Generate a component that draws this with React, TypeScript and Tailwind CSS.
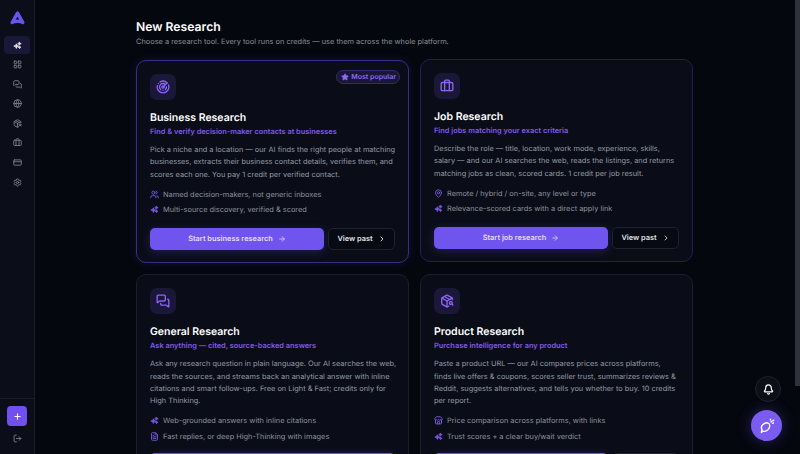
import React from "react";
import { ArrowRight, Bell, Briefcase, ChevronRight, CreditCard, FileText, Globe, LayoutGrid, LogOut, MapPin, MessagesSquare, PackageSearch, Plus, Radar, Star, Store, Users, Settings } from "lucide-react";

function Spark({ className = "" }: { className?: string; strokeWidth?: number }) {
  return (
    <svg viewBox="0 0 24 24" className={className} fill="currentColor" stroke="currentColor" strokeWidth="2" strokeLinejoin="round">
      <path d="M9 7.500l2 4.300 4.600 1.700-4.400 1.900L9 20l-2.200-4.600L2 13.500l4.700-1.800z" />
      <path d="M17 2.500l1.400 3.200 3.400 1.400-3.400 1.400L17 11.500l-1.400-3L12.400 7.100l3.200-1.400z" />
      <path d="M17.500 13.500l1.100 2.300 2.400 1-2.400 1.100-1.100 2.600-1.100-2.600-2.400-1.100 2.400-1z" />
    </svg>
  );
}

type Feature = { icon: React.ReactNode; text: string };
type CardProps = {
  icon: React.ReactNode;
  title: string;
  sub: string;
  desc: string;
  features: Feature[];
  cta: string;
  highlight?: boolean;
  accent?: boolean;
  lift?: boolean;
  top?: boolean;
  noPast?: boolean;
};

function Card({ icon, title, sub, desc, features, cta, highlight, accent, lift, top, noPast }: CardProps) {
  const border = highlight ? "border-[#3a2d85]" : accent ? "border-[#221f52]" : "border-[#1b1f2d]";
  return (
    <div className={`relative rounded-[10px] border ${border} bg-[#0a0d18] px-[13px] pt-[13px] pb-[12px] ${lift ? "-translate-y-px" : ""} ${highlight ? "shadow-[0_0_10px_rgba(80,60,200,0.18)]" : ""}`}>
      {highlight && (
        <div className="absolute right-[8px] top-[9px] flex h-[14px] items-center gap-[2px] rounded-full border border-[#33296e] bg-[#1a1638] pl-[4px] pr-[3px] text-[7px] font-semibold text-[#8b6cf0]">
          <Star className="h-[8px] w-[8px]" fill="currentColor" />
          Most popular
        </div>
      )}
      <div className="flex h-[26px] w-[26px] items-center justify-center rounded-[7px] bg-[#1a1738] text-[#8b66f5]">{icon}</div>
      <div className="mt-[10px] text-[10.5px] font-semibold leading-[16px] text-white">{title}</div>
      <div className="mt-[-1px] text-[7.4px] font-semibold leading-[13px] text-[#8259ec]">{sub}</div>
      <p className={`${highlight || noPast ? "mr-[-2px]" : ""} mt-[6px] text-[7.4px] leading-[12.4px] text-[#949aa5]`}>{desc}</p>
      <div className={`${top ? "mt-[7px]" : "mt-[6.5px]"} flex flex-col gap-[3px]`}>
        {features.map((f) => (
          <div key={f.text} className="flex h-[12.5px] items-center gap-[4px] text-[7.4px] text-[#8d919c]">
            <span className="flex h-[9px] w-[9px] items-center justify-center text-[#7c58e8]">{f.icon}</span>
            {f.text}
          </div>
        ))}
      </div>
      <div className={`${top ? "mt-[11.5px]" : "mt-[11px]"} flex gap-[4px]`}>
        <div className="flex h-[22.5px] flex-1 items-center justify-center gap-[5px] rounded-[5px] bg-[#6f55ee] text-[7.4px] font-semibold text-[#e4ddff] shadow-[0_2px_8px_rgba(90,70,230,0.3)]">
          {cta}
          <ArrowRight className="h-[8px] w-[8px]" strokeWidth={2.2} />
        </div>
        {!noPast && (
          <div className="flex h-[22.5px] w-[67px] items-center justify-center gap-[5px] rounded-[5px] border border-[#1f2230] bg-[#080a13] text-[7.4px] font-semibold text-[#dfe0e4]">
            View past
            <ChevronRight className="h-[8px] w-[8px]" strokeWidth={2.5} />
          </div>
        )}
      </div>
    </div>
  );
}

const nav = [Spark, LayoutGrid, MessagesSquare, Globe, PackageSearch, Briefcase, CreditCard, Settings];
const I = "h-[14px] w-[14px]";
const F = "h-[9px] w-[9px]";

export default function App() {
  return (
    <div className="relative flex h-[454px] w-[800px] overflow-hidden bg-[#05070f] [text-rendering:geometricPrecision]" style={{ fontFamily: "Inter, sans-serif" }}>
      <aside className="flex h-full w-[35px] shrink-0 flex-col items-center border-r border-[#1a1d29] bg-[#0b0e18]">
        <svg viewBox="0 0 24 24" className="mt-[10px] h-[15px] w-[15px]" fill="none" stroke="#6a54ee" strokeWidth="5.5" strokeLinejoin="round" strokeLinecap="round">
          <path d="M12 5 3.500 20c3-2.500 14-2.500 17 0z" />
        </svg>
        <div className="mt-[11px] flex w-full flex-col items-center gap-[1.6px]">
          {nav.map((Icon, i) => (
            <div key={i} className={`flex h-[18px] items-center justify-center rounded-[4px] ${i === 0 ? "w-[26px] bg-[#1a1738] text-[#e5e5ea]" : "w-[26px] text-[#747883]"}`}>
              <Icon className="h-[9px] w-[9px]" strokeWidth={2.6} />
            </div>
          ))}
        </div>
        <div className="mt-auto flex w-full flex-col items-center border-t border-[#1a1d29] pb-[11px] pt-[7px]">
          <div className="flex h-[20px] w-[20px] items-center justify-center rounded-[4px] bg-[#7250f0] text-white">
            <Plus className="h-[9px] w-[9px]" strokeWidth={3} />
          </div>
          <LogOut className="mt-[8px] h-[9px] w-[9px] text-[#7b7f8a]" strokeWidth={2.4} />
        </div>
      </aside>
      <main className="flex-1 pl-[101px] pt-[18px]">
        <h1 className="text-[12.2px] font-semibold leading-[17px] text-white">New Research</h1>
        <p className="mt-[1px] text-[7.4px] leading-[12px] text-[#8a8e99]">Choose a research tool. Every tool runs on credits — use them across the whole platform.</p>
        <div className="mt-[12px] grid grid-cols-[273px_273px] gap-x-[11px] gap-y-[11px]">
          <Card highlight top icon={<Radar className={I} strokeWidth={2.3} />} title="Business Research" sub="Find & verify decision-maker contacts at businesses"
            desc="Pick a niche and a location — our AI finds the right people at matching businesses, extracts their business contact details, verifies them, and scores each one. You pay 1 credit per verified contact."
            features={[{ icon: <Users className={F} strokeWidth={2.4} />, text: "Named decision-makers, not generic inboxes" }, { icon: <Spark className={F} />, text: "Multi-source discovery, verified & scored" }]}
            cta="Start business research" />
          <Card accent lift top icon={<Briefcase className={I} strokeWidth={2.3} />} title="Job Research" sub="Find jobs matching your exact criteria"
            desc="Describe the role — title, location, work mode, experience, skills, salary — and our AI searches the web, reads the listings, and returns matching jobs as clean, scored cards. 1 credit per job result."
            features={[{ icon: <MapPin className={F} strokeWidth={2.4} />, text: "Remote / hybrid / on-site, any level or type" }, { icon: <Spark className={F} />, text: "Relevance-scored cards with a direct apply link" }]}
            cta="Start job research" />
          <Card noPast icon={<MessagesSquare className={I} strokeWidth={2.3} />} title="General Research" sub="Ask anything — cited, source-backed answers"
            desc="Ask any research question in plain language. Our AI searches the web, reads the sources, and streams back an analytical answer with inline citations and smart follow-ups. Free on Light & Fast; credits only for High Thinking."
            features={[{ icon: <Spark className={F} />, text: "Web-grounded answers with inline citations" }, { icon: <FileText className={F} strokeWidth={2.4} />, text: "Fast replies, or deep High-Thinking with images" }]}
            cta="Start general research" />
          <Card icon={<PackageSearch className={I} strokeWidth={2.3} />} title="Product Research" sub="Purchase intelligence for any product"
            desc="Paste a product URL — our AI compares prices across platforms, finds live offers & coupons, scores seller trust, summarizes reviews & Reddit, suggests alternatives, and tells you whether to buy. 10 credits per report."
            features={[{ icon: <Store className={F} strokeWidth={2.4} />, text: "Price comparison across platforms, with links" }, { icon: <Spark className={F} />, text: "Trust scores + a clear buy/wait verdict" }]}
            cta="Start product research" />
        </div>
      </main>
      <div className="absolute right-0 top-0 h-[386px] w-[5px] bg-[#2e323c]" />
      <div className="absolute left-[755px] top-[376px] flex h-[26px] w-[26px] items-center justify-center rounded-full border border-[#1f222c] bg-[#0c0f18] text-white">
        <Bell className="h-[11px] w-[11px]" strokeWidth={2.6} />
      </div>
      <div className="absolute left-[751px] top-[410px] flex h-[31px] w-[31px] items-center justify-center rounded-full bg-[#7a5cf0] text-white shadow-[0_0_14px_rgba(110,80,240,0.35)]">
        <svg viewBox="0 0 24 24" className="h-[18px] w-[18px]" fill="none" stroke="currentColor" strokeWidth="1.9" strokeLinecap="round" strokeLinejoin="round">
          <path d="M4.500 20.500l.8-3.800c-1.300-2.300-.7-5 1.300-6.800 2.700-2.400 5.800-2.700 7.800-1.200 1.700 1.500 1.500 5-.7 7.800-1.900 2.200-4.700 3.100-7.200 2.400z" />
          <path d="M17.500 6.500l.8-.8M19.500 8.500l1-.5M16.500 4l.3-1M20 5l1-.8" />
        </svg>
      </div>
    </div>
  );
}
